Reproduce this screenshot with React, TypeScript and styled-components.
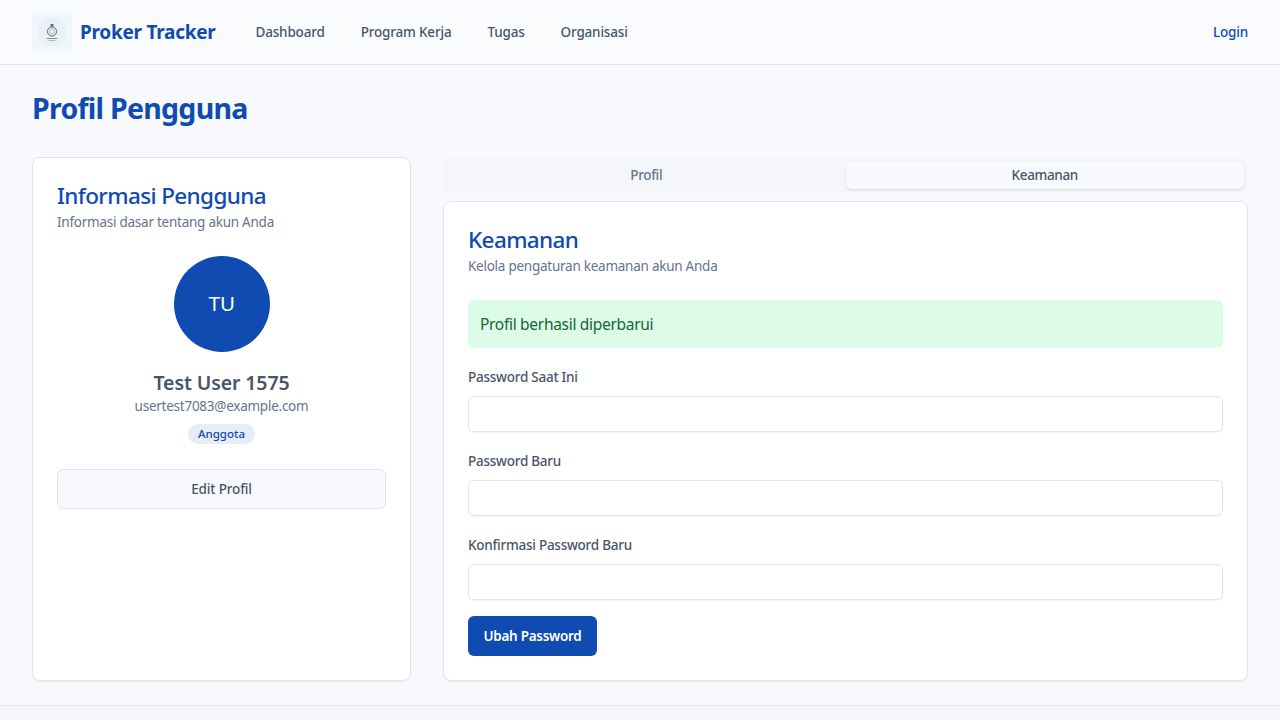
import React from "react";
import styled, { createGlobalStyle } from "styled-components";

const Global = createGlobalStyle`
  html, body { margin: 0; padding: 0; height: 100%; overflow: hidden; }
  body { background: #f8f9fd; font-family: "Noto Sans", "Open Sans", Arial, sans-serif; color: #475569; }
  * { box-sizing: border-box; }
`;
const Viewport = styled.div`
  height: 100vh; overflow-y: scroll;
  &::-webkit-scrollbar { width: 15px; }
  &::-webkit-scrollbar-track { background: #fafafa; }
  &::-webkit-scrollbar-thumb {
    background: #8f8f8f content-box; border: 3px solid transparent; border-top-width: 0; border-bottom-width: 0; border-radius: 8px;
  }
  &::-webkit-scrollbar-button:single-button { height: 18px; background-color: #fafafa; background-repeat: no-repeat; background-size: 4px 5px; }
  &::-webkit-scrollbar-button:single-button:vertical:decrement {
    background-image: linear-gradient(to bottom right, transparent 50%, #8f8f8f 50%), linear-gradient(to bottom left, transparent 50%, #8f8f8f 50%);
    background-position: 3.5px 6px, 7.5px 6px;
  }
  &::-webkit-scrollbar-button:single-button:vertical:increment {
    background-image: linear-gradient(to top right, transparent 50%, #8f8f8f 50%), linear-gradient(to top left, transparent 50%, #8f8f8f 50%);
    background-position: 3.5px 7px, 7.5px 7px;
  }
`;
const Page = styled.div`display: flex; flex-direction: column; min-height: 774px;`;
const Header = styled.header`
  height: 65px; border-bottom: 1px solid #e2e4ea; background: #fafbfe;
  display: flex; align-items: center; padding: 0 32px;
`;
const LogoBox = styled.div`
  width: 40px; height: 40px; background: #f0f7fa; display: flex; align-items: center; justify-content: center; margin-right: 8px;
`;
const Brand = styled.span`font-size: 19px; font-weight: 700; color: #0f4bb0; margin-right: 24px; letter-spacing: -0.27px;`;
const Nav = styled.nav`display: flex; flex: 1;`;
const NavLink = styled.a`
  height: 40px; padding: 0 16px; margin-right: 4px; display: flex; align-items: center; font-size: 13.5px; font-weight: 500; color: #475569; border-radius: 6px; background: #fbfcfe;
  letter-spacing: -0.18px;
`;
const Login = styled.a`font-size: 13.5px; font-weight: 500; color: #0f4bb0; letter-spacing: -0.18px;`;
const Main = styled.main`flex: 1; padding: 24px 32px;`;
const Title = styled.h1`margin: 0 0 30px; font-size: 28.5px; line-height: 38px; font-weight: 700; color: #0f4bb0; letter-spacing: -0.73px;`;
const Columns = styled.div`display: grid; grid-template-columns: 379px 1fr; gap: 32px; align-items: stretch;`;
const Card = styled.section`
  background: #fff; border: 1px solid #e2e4ea; border-radius: 8px; padding: 24px; box-shadow: 0 1px 2px rgba(0,0,0,.06);
`;
const CardTitle = styled.h2`margin: 0; font-size: 22.5px; line-height: 28px; font-weight: 500; color: #0f4bb0; letter-spacing: -0.62px;`;
const CardSub = styled.p`margin: 2px 0 0; font-size: 13.5px; line-height: 20px; color: #64748b; letter-spacing: -0.25px;`;
const ProfileBody = styled.div`display: flex; flex-direction: column; align-items: center; margin-top: 24px;`;
const Avatar = styled.div`
  width: 96px; height: 96px; border-radius: 50%; background: #0f4bb0; color: #fff; display: flex; align-items: center; justify-content: center;
  font-family: "Liberation Sans", Arial, sans-serif; font-size: 20px; padding-top: 1px;
`;
const UserName = styled.h3`margin: 18px 0 0; font-size: 19.5px; line-height: 26px; font-weight: 600; color: #475569; letter-spacing: -0.1px;`;
const Email = styled.p`margin: 0; font-size: 13.5px; line-height: 20px; color: #64748b; letter-spacing: -0.25px;`;
const Badge = styled.span`margin-top: 8px; height: 20px; padding: 0 10px; border-radius: 10px; background: #e7edf7; color: #0f4bb0; font-size: 11.5px; line-height: 20px; font-weight: 500; letter-spacing: 0;`;
const OutlineButton = styled.button`
  margin-top: 25px; width: 100%; height: 40px; border: 1px solid #e2e4ea; border-radius: 6px; background: #f8f9fd; color: #475569; font: 500 13.5px "Noto Sans", sans-serif; letter-spacing: -0.15px;
`;
const Tabs = styled.div`display: grid; grid-template-columns: 1fr 1fr; height: 36px; margin-bottom: 8px; padding: 4px; background: #f5f6f9; border-radius: 8px; gap: 0;`;
const Tab = styled.div<{ $active?: boolean }>`
  display: flex; align-items: center; justify-content: center; font-size: 13.5px; font-weight: 500; letter-spacing: -0.35px; border-radius: 6px;
  color: ${p => p.$active ? "#475569" : "#64748b"};
  background: ${p => p.$active ? "#f8f9fd" : "transparent"};
  box-shadow: ${p => p.$active ? "0 1px 3px rgba(0,0,0,.12)" : "none"};
`;
const Alert = styled.div`margin-top: 24px; height: 48px; padding: 0 12px; display: flex; align-items: center; background: #dcfce7; color: #166534; border-radius: 6px; font-size: 15.5px; letter-spacing: -0.3px;`;
const Form = styled.form`display: flex; flex-direction: column; gap: 16px; margin-top: 16px;`;
const Field = styled.div`display: flex; flex-direction: column; gap: 9px; padding-top: 3px;`;
const Label = styled.label`font-size: 13.5px; line-height: 20px; font-weight: 500; color: #475569; letter-spacing: -0.25px;`;
const Input = styled.input`height: 36px; border: 1px solid #e2e4ea; border-radius: 6px; background: #fff; box-shadow: 0 1px 2px rgba(0,0,0,.05); padding: 0 12px;`;
const Submit = styled.button`align-self: flex-start; height: 40px; width: 129px; padding: 0; border: 0; border-radius: 6px; background: #0f4bb0; color: #fff; font: 600 13.5px "Noto Sans", sans-serif; letter-spacing: -0.28px;`;
const Footer = styled.footer`height: 69px; border-top: 1px solid #e2e4ea; background: #f5f6f9;`;

const Logo = () => (
  <svg width="40" height="40" viewBox="0 0 40 40" aria-hidden="true">
    <circle cx="20" cy="20" r="14" fill="#e9f1f5" />
    <circle cx="20" cy="19.5" r="4.6" fill="#dbe3ee" stroke="#66748a" strokeWidth="1" />
    <circle cx="20" cy="19.5" r="2.2" fill="#f1f5fa" stroke="#8b98ad" strokeWidth=".5" />
    <rect x="18.6" y="12" width="2.8" height="2.8" fill="#5a687e" />
    <rect x="14.5" y="26" width="11" height="1" fill="#87938c" />
    <rect x="16.5" y="28" width="7" height="1" fill="#b0b8a8" />
  </svg>
);

export default function App() {
  return (
    <Viewport>
      <Global />
      <Page>
        <Header>
          <LogoBox><Logo /></LogoBox>
          <Brand>Proker Tracker</Brand>
          <Nav>
            <NavLink>Dashboard</NavLink>
            <NavLink>Program Kerja</NavLink>
            <NavLink>Tugas</NavLink>
            <NavLink>Organisasi</NavLink>
          </Nav>
          <Login>Login</Login>
        </Header>
        <Main>
          <Title>Profil Pengguna</Title>
          <Columns>
            <Card>
              <CardTitle>Informasi Pengguna</CardTitle>
              <CardSub>Informasi dasar tentang akun Anda</CardSub>
              <ProfileBody>
                <Avatar>TU</Avatar>
                <UserName>Test User 1575</UserName>
                <Email>usertest7083@example.com</Email>
                <Badge>Anggota</Badge>
                <OutlineButton>Edit Profil</OutlineButton>
              </ProfileBody>
            </Card>
            <div>
              <Tabs>
                <Tab>Profil</Tab>
                <Tab $active>Keamanan</Tab>
              </Tabs>
              <Card>
                <CardTitle>Keamanan</CardTitle>
                <CardSub>Kelola pengaturan keamanan akun Anda</CardSub>
                <Alert>Profil berhasil diperbarui</Alert>
                <Form>
                  <Field><Label>Password Saat Ini</Label><Input type="password" /></Field>
                  <Field><Label>Password Baru</Label><Input type="password" /></Field>
                  <Field><Label>Konfirmasi Password Baru</Label><Input type="password" /></Field>
                  <Submit type="button">Ubah Password</Submit>
                </Form>
              </Card>
            </div>
          </Columns>
        </Main>
        <Footer />
      </Page>
    </Viewport>
  );
}
